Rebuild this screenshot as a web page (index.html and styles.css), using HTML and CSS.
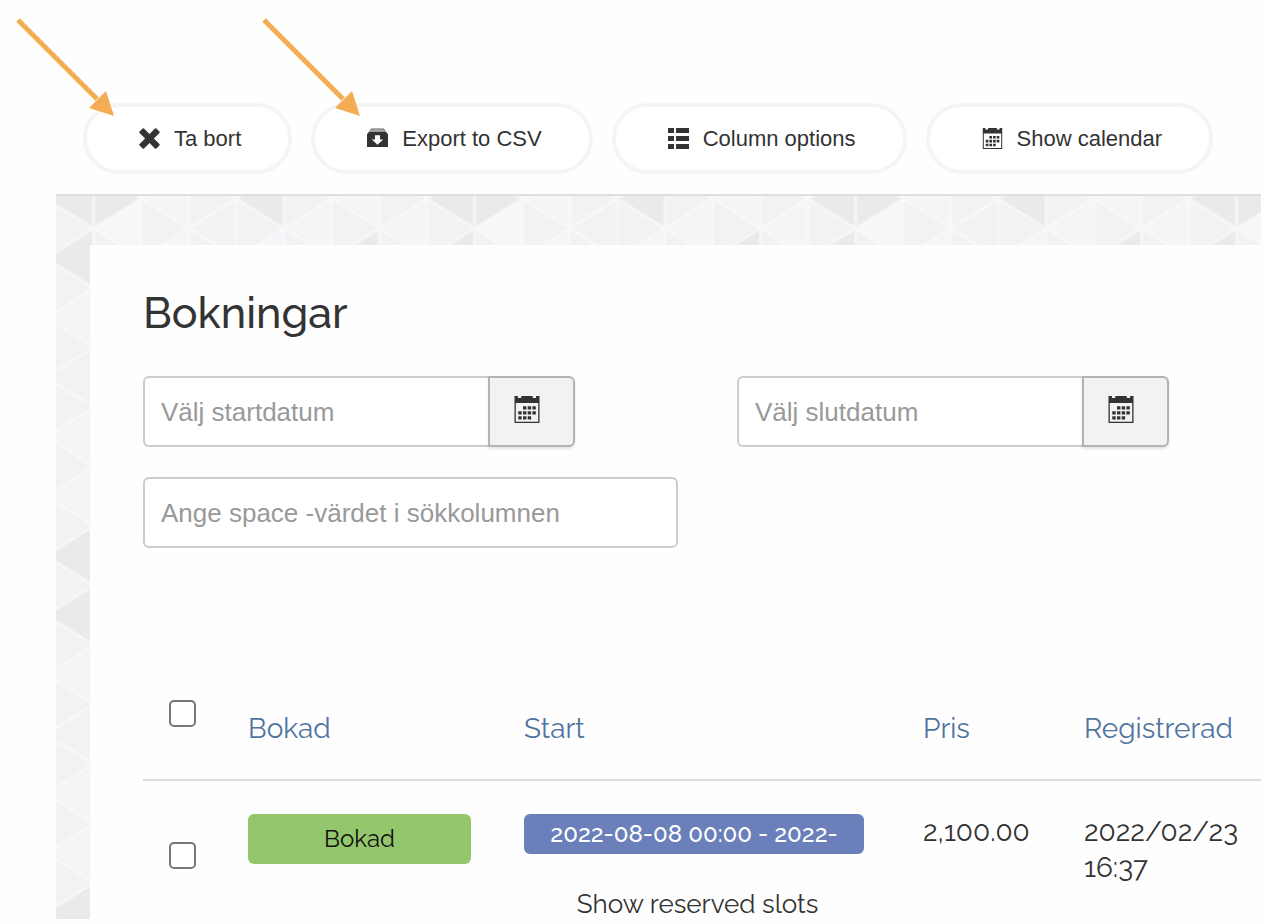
FILE: index.html
```html
<!DOCTYPE html>
<html lang="sv">
<head>
  <meta charset="utf-8">
  <title>Bokningar</title>
  <link rel="stylesheet" href="styles.css">
</head>
<body>
  <!-- Shared icons -->
  <svg class="icon-defs" aria-hidden="true">
    <symbol id="icon-calendar" viewBox="0 0 25 27">
      <path d="M0 0h3.4v2h3.4V0h11.4v2h3.4V0H25v27H0zM1.3 7v18.7h22.4V7z" fill-rule="evenodd"/>
      <path d="M8.5 10.2h3.4v3.4H8.5zM13.2 10.2h3.4v3.4h-3.4zM17.9 10.2h3.4v3.4h-3.4zM3.8 15.2h3.4v3.4H3.8zM8.5 15.2h3.4v3.4H8.5zM13.2 15.2h3.4v3.4h-3.4zM17.9 15.2h3.4v3.4h-3.4zM3.8 20.2h3.4v3.4H3.8zM8.5 20.2h3.4v3.4H8.5zM13.2 20.2h3.4v3.4h-3.4z"/>
    </symbol>
    <symbol id="arrow" viewBox="0 0 100 100">
      <path d="M3 3L82 82" stroke="currentColor" stroke-width="5"/>
      <path d="M99 99L91 74L74 91z"/>
    </symbol>
  </svg>

  <div class="page">
    <div class="toolbar">
      <div class="toolbar-item">
        <button type="button" class="pill">
          <svg class="icon" viewBox="0 0 21 21"><path d="M3.6.6a1 1 0 0 1 1.4 0l5.5 5.5L16 .6a1 1 0 0 1 1.4 0l3 3a1 1 0 0 1 0 1.4l-5.5 5.500 5.500 5.500a1 1 0 0 1 0 1.400l-3 3a1 1 0 0 1-1.400 0l-5.500-5.500L5 20.400a1 1 0 0 1-1.400 0l-3-3a1 1 0 0 1 0-1.400l5.500-5.500L.6 5a1 1 0 0 1 0-1.400z"/></svg>
          Ta bort
        </button>
        <svg class="pointer"><use href="#arrow"/></svg>
      </div>
      <div class="toolbar-item">
        <button type="button" class="pill">
          <svg class="icon" viewBox="0 0 21 21"><path d="M4 1.5h13l.8 1.5H3.2z" fill="#aaa"/><path d="M3.2 2.700L3.800 1.500Q4 1 4.600 1h11.800q.6 0 .8.500l.6 1.200" fill="none" stroke="currentColor" stroke-width=".8"/><path d="M2.200 3.600h16.600L21 6.200V19H0V6.200zM8 7.200v4.300H4.800l5.700 5.300 5.700-5.300H13V7.200z" fill-rule="evenodd"/></svg>
          Export to CSV
        </button>
        <svg class="pointer pointer-export"><use href="#arrow"/></svg>
      </div>
      <div class="toolbar-item">
        <button type="button" class="pill">
          <svg class="icon" viewBox="0 0 21 21"><path d="M0 0h6v5H0zM8 0h13v5H8zM0 8h6v5H0zM8 8h13v5H8zM0 16h6v5H0zM8 16h13v5H8z"/></svg>
          Column options
        </button>
      </div>
      <div class="toolbar-item">
        <button type="button" class="pill">
          <svg class="icon"><use href="#icon-calendar"/></svg>
          Show calendar
        </button>
      </div>
    </div>

    <div class="content">
      <div class="card">
        <h1>Bokningar</h1>
        <form class="filters">
          <div class="date-group">
            <input type="text" class="field" placeholder="Välj startdatum" aria-label="Välj startdatum">
            <button type="button" class="date-button" aria-label="Öppna kalender för startdatum"><svg><use href="#icon-calendar"/></svg></button>
          </div>
          <div class="date-group">
            <input type="text" class="field" placeholder="Välj slutdatum" aria-label="Välj slutdatum">
            <button type="button" class="date-button" aria-label="Öppna kalender för slutdatum"><svg><use href="#icon-calendar"/></svg></button>
          </div>
          <input type="text" class="field" placeholder="Ange space -värdet i sökkolumnen" aria-label="Ange space -värdet i sökkolumnen">
        </form>

        <table class="bookings">
          <colgroup>
            <col class="col-check">
            <col class="col-status">
            <col class="col-start">
            <col class="col-price">
            <col class="col-registered">
          </colgroup>
          <thead>
            <tr>
              <th class="check"><input type="checkbox" aria-label="Markera alla"></th>
              <th><a href="#">Bokad</a></th>
              <th><a href="#">Start</a></th>
              <th><a href="#">Pris</a></th>
              <th><a href="#">Registrerad</a></th>
            </tr>
          </thead>
          <tbody>
            <tr>
              <td class="check"><input type="checkbox" aria-label="Markera bokning"></td>
              <td><span class="status">Bokad</span></td>
              <td>
                <span class="slot">2022-08-08 00:00 - 2022-</span>
                <a href="#" class="slots-link">Show reserved slots</a>
              </td>
              <td>2,100.00</td>
              <td>2022/02/23 16:37</td>
            </tr>
          </tbody>
        </table>
      </div>
    </div>
  </div>
</body>
</html>
```
FILE: styles.css
```css
* {
  box-sizing: border-box;
}
body {
  margin: 0;
  background: #fefefe;
  color: #333;
  font-family: Raleway, Lato, sans-serif;
}
.icon-defs {
  display: none;
}
.page {
  display: flex;
  flex-direction: column;
  min-height: 100vh;
  padding: 0 3px 5px 56px;
}

/* Toolbar */
.toolbar {
  display: flex;
  gap: 19px;
  padding: 103px 27px 20px;
  border-bottom: 2px solid #dfdfe0;
}
.toolbar-item {
  position: relative;
}
.pill {
  display: flex;
  align-items: center;
  gap: 14px;
  height: 71px;
  padding: 0 47px 0 52px;
  border: 4px solid #f5f5f5;
  border-radius: 36px;
  background: #fff;
  color: #333;
  font-family: "Helvetica Neue", "Liberation Sans", sans-serif;
  font-size: 22px;
  line-height: 28px;
  white-space: nowrap;
}
.icon {
  width: 21px;
  height: 21px;
  fill: currentColor;
}
.pointer {
  position: absolute;
  top: -86px;
  left: -68px;
  width: 100px;
  height: 100px;
  color: #f4ad52;
  fill: currentColor;
  pointer-events: none;
}
.pointer-export {
  left: -50px;
}

/* Triangle pattern behind the card */
.content {
  display: flex;
  flex: 1;
  padding: 49px 0 0 34px;
  background-color: #f4f5f7;
  background-image: url("data:image/svg+xml,%3Csvg xmlns='http://www.w3.org/2000/svg' viewBox='0 0 380 360' preserveAspectRatio='none'%3E%3Cdefs%3E%3Cpattern id='fill' width='95' height='60' patternUnits='userSpaceOnUse'%3E%3Cpath d='M47.500 0V60L95 30zM0 0V30L47.500 0zM0 30V60H47.500z' fill='%23f1f2f4'/%3E%3C/pattern%3E%3Cpattern id='lines' width='95' height='60' patternUnits='userSpaceOnUse'%3E%3Cpath d='M0 30L47.500 0L95 30L47.500 60zM47.500 0V60M0 0V60M95 0V60' fill='none' stroke='%23f9fafb' stroke-width='3' stroke-opacity='.7'/%3E%3C/pattern%3E%3C/defs%3E%3Crect width='380' height='360' fill='url(%23fill)'/%3E%3Cpath d='M47.500 0V60L95 30zM47.500 0V60L0 30zM47.500 60V120L0 90zM237.500 0V60L190 30zM332.500 60V120L285 90z' fill='%23e9eaec'/%3E%3Cpath d='M95 30V90L47.500 60z' fill='%23f6f7f9'/%3E%3Cpath d='M47.500 180V240L0 210zM190 30V90L142.500 60z' fill='%23f1f2f4'/%3E%3Crect width='380' height='360' fill='url(%23lines)'/%3E%3C/svg%3E");
  background-size: 381px 357px;
  background-position: -10px -27px;
}
.card {
  flex: 1;
  min-width: 0;
  padding: 42px 0 0 53px;
  background: #fefefe;
}
h1 {
  margin: 0 0 37px;
  font-size: 43px;
  font-weight: 500;
  line-height: 52px;
}

/* Filters */
.filters {
  display: grid;
  grid-template-columns: minmax(0, 535px) minmax(0, 432px);
  gap: 30px 59px;
}
.date-group {
  display: flex;
  max-width: 432px;
}
.field {
  width: 100%;
  min-width: 0;
  height: 71px;
  padding: 2px 16px 0;
  border: 2px solid #ccc;
  border-radius: 6px;
  background: #fff;
  color: #555;
  font-family: "Helvetica Neue", "Liberation Sans", sans-serif;
  font-size: 26px;
}
.field::placeholder {
  color: #999;
  opacity: 1;
}
.date-group .field {
  flex: 1;
  border-right: 0;
  border-radius: 6px 0 0 6px;
}
.date-button {
  width: 87px;
  padding: 0 0 5px 24px;
  border: 2px solid #b3b3b3;
  border-radius: 0 6px 6px 0;
  background: #f2f2f2;
  box-shadow: 0 2px 3px rgba(0, 0, 0, 0.1);
  text-align: left;
}
.date-button svg {
  display: block;
  width: 26px;
  height: 27px;
  fill: #333;
}

/* Bookings table */
.bookings {
  width: 100%;
  margin-top: 128px;
  border-collapse: collapse;
  table-layout: fixed;
  font-size: 28px;
  line-height: 36px;
}
.col-check {
  width: 79px;
}
.col-status {
  width: 276px;
}
.col-start {
  width: 399px;
}
.col-price {
  width: 161px;
}
.bookings th {
  padding: 35px 0 32px 26px;
  border-bottom: 2px solid #ddd;
  font-weight: 400;
  text-align: left;
  vertical-align: top;
}
.bookings td {
  padding: 33px 0 0 26px;
  vertical-align: top;
}
.bookings th.check {
  padding-top: 24px;
}
.bookings td.check {
  padding-top: 61px;
}
.bookings a {
  color: #4f749f;
  text-decoration: none;
}
.check input {
  display: block;
  width: 27px;
  height: 27px;
  margin: 0;
  border: 2px solid #777;
  border-radius: 5px;
  background: #fff;
  appearance: none;
}
.check input:checked {
  background: #4f749f;
}
.status,
.slot {
  display: block;
  border-radius: 6px;
  text-align: center;
}
.status {
  margin-right: 27px;
  background: #94c76b;
  color: #111;
  font-size: 24px;
  line-height: 50px;
}
.slot {
  width: 340px;
  background: #6b7fbb;
  color: #fff;
  font-size: 24px;
  font-weight: 500;
  line-height: 40px;
}
.bookings .slots-link {
  display: block;
  margin: 35px 26px 0 0;
  color: #333;
  font-size: 26px;
  line-height: 30px;
  text-align: center;
}
```
